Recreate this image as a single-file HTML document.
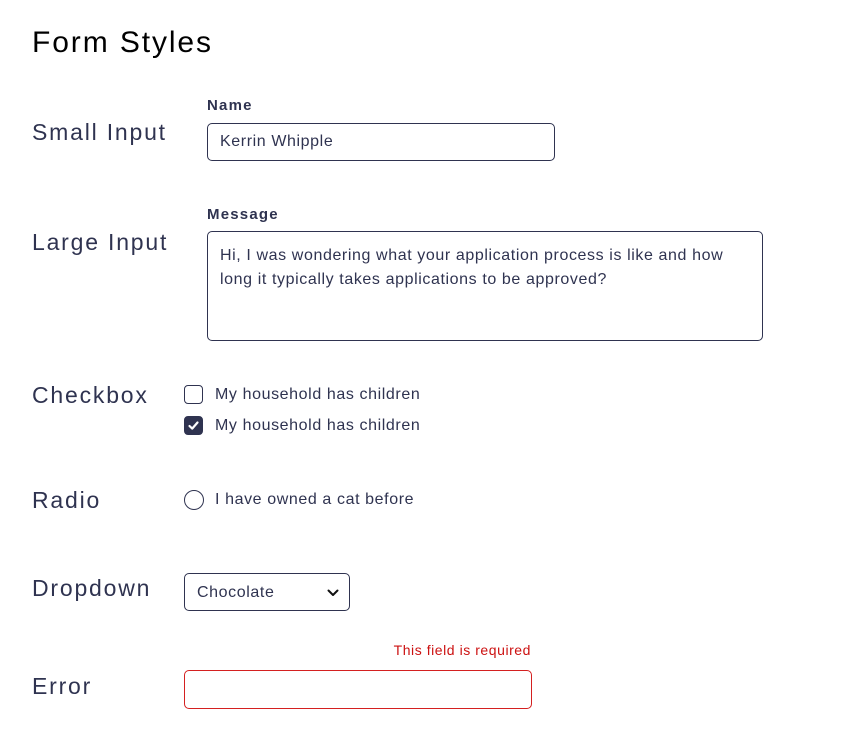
<!DOCTYPE html>
<html><head><style>
body{margin:0;width:847px;height:755px;background:#fff;font-family:"Liberation Sans",sans-serif;color:#2f3350;position:relative;overflow:hidden}
.a{position:absolute;white-space:nowrap}
.h{font-size:30px;color:#000;left:32px;top:26px;letter-spacing:1.9px}
.l{font-size:23px;left:32px;letter-spacing:1.8px}
.lab{font-size:15px;font-weight:bold;left:207px;letter-spacing:1.2px}
.box{position:absolute;border:1px solid #2f3350;border-radius:5px;box-sizing:border-box;font-size:16px;letter-spacing:0.6px}
.t{font-size:16px;letter-spacing:0.6px}
</style></head><body>
<div class="a h">Form Styles</div>

<div class="a l" style="top:119px">Small Input</div>
<div class="a lab" style="top:97px">Name</div>
<div class="box" style="left:207px;top:123px;width:348px;height:38px;padding:9px 12px">Kerrin Whipple</div>

<div class="a l" style="top:229px">Large Input</div>
<div class="a lab" style="top:206px">Message</div>
<div class="box" style="left:207px;top:231px;width:556px;height:110px;padding:12px 12px;line-height:24px;white-space:normal">Hi, I was wondering what your application process is like and how long it typically takes applications to be approved?</div>

<div class="a l" style="top:382px">Checkbox</div>
<div class="box" style="left:184px;top:385px;width:19px;height:19px;border-radius:4px"></div>
<div class="a t" style="left:215px;top:386px">My household has children</div>
<div class="box" style="left:184px;top:416px;width:19px;height:19px;border-radius:4px;background:#2f3350">
<svg width="17" height="17" viewBox="0 0 17 17" style="position:absolute;left:0;top:0"><path d="M4.5 9l2.7 2.6L12.5 5.5" fill="none" stroke="#fff" stroke-width="2.2" stroke-linecap="round" stroke-linejoin="round"/></svg></div>
<div class="a t" style="left:215px;top:417px">My household has children</div>

<div class="a l" style="top:487px">Radio</div>
<div class="box" style="left:184px;top:490px;width:20px;height:20px;border-radius:50%"></div>
<div class="a t" style="left:215px;top:491px">I have owned a cat before</div>

<div class="a l" style="top:575px">Dropdown</div>
<div class="box" style="left:184px;top:573px;width:166px;height:38px;padding:10px 12px">Chocolate
<svg width="12" height="8" viewBox="0 0 12 8" style="position:absolute;right:10px;top:15px"><path d="M1.5 1.5L6 6l4.5-4.5" fill="none" stroke="#111" stroke-width="2" stroke-linecap="round" stroke-linejoin="round"/></svg></div>

<div class="a" style="right:316px;top:642px;font-size:14px;color:#cc1111;letter-spacing:0.55px">This field is required</div>
<div class="a l" style="top:673px">Error</div>
<div class="box" style="left:184px;top:670px;width:348px;height:39px;border-color:#d42020"></div>
</body></html>
